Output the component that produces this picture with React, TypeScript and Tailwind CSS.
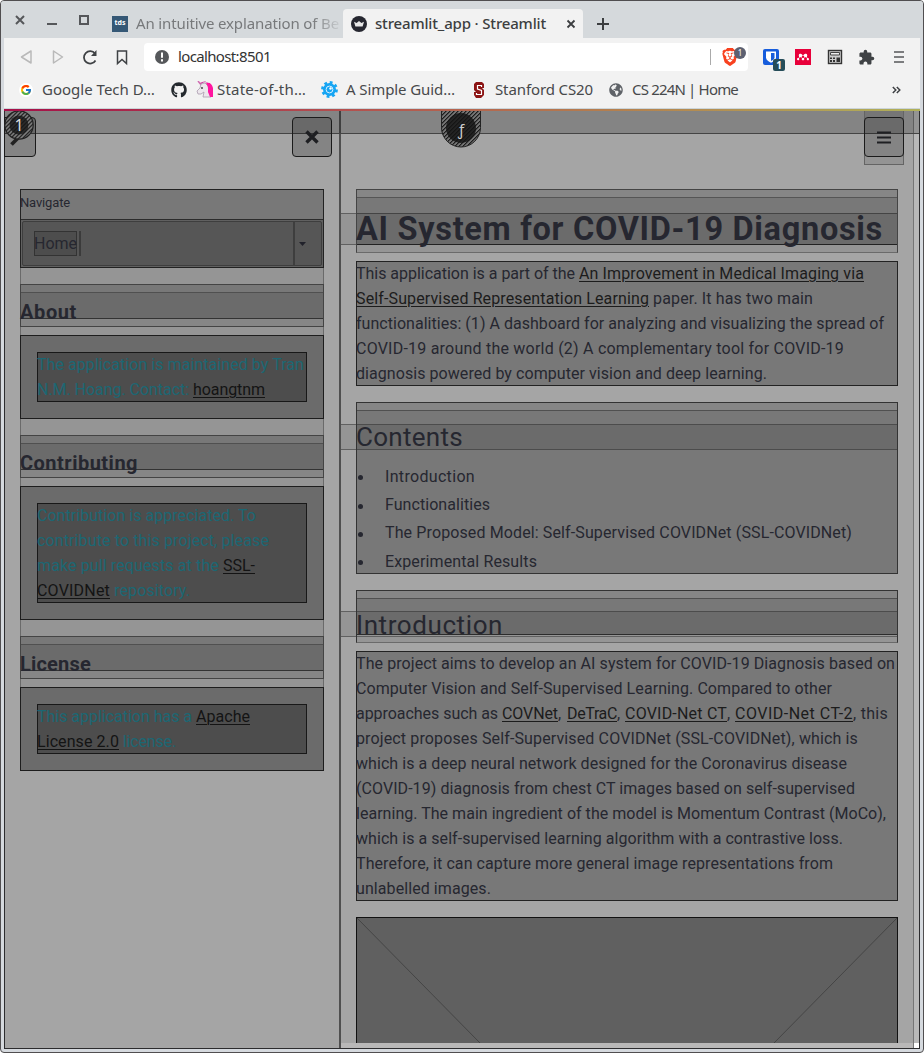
import React, { useLayoutEffect, useRef } from "react";
import { FcGoogle } from "react-icons/fc";
import { FaGithub, FaGlobeAmericas } from "react-icons/fa";
import { MdExtension } from "react-icons/md";
import { SiBrave, SiMendeley } from "react-icons/si";

/* A run of text whose tracking is tuned so that it fills exactly `w` pixels. */
function Fit({ w, children, className = "" }: { w: number; children: string; className?: string }) {
  const ref = useRef<HTMLSpanElement>(null);
  useLayoutEffect(() => {
    const el = ref.current;
    if (!el) return;
    el.style.letterSpacing = "0px";
    const natural = el.getBoundingClientRect().width;
    el.style.letterSpacing = `${(w - natural) / children.length}px`;
  }, [w, children]);
  return (
    <span ref={ref} className={`inline-block shrink-0 whitespace-pre ${className}`}>
      {children}
    </span>
  );
}

type Seg = [text: string, width: number, link?: boolean];

function Lines({ rows, link }: { rows: Seg[][]; link: string }) {
  return (
    <>
      {rows.map((row, i) => (
        <div key={i} className="flex h-[25px] text-[16px] leading-[25px]">
          {row.map(([t, w, l], j) => (
            <Fit key={j} w={w} className={l ? `underline decoration-1 underline-offset-2 ${link}` : ""}>
              {t}
            </Fit>
          ))}
        </div>
      ))}
    </>
  );
}

function TabStrip() {
  return (
    <div className="flex h-[37px] bg-[#d5d9dc]">
      <svg width="110" height="37" viewBox="1 1 110 37" className="shrink-0">
        <path d="M16 16l8 8M24 16l-8 8" stroke="#55575a" strokeWidth="2" fill="none" />
        <path d="M47 24h10" stroke="#55575a" strokeWidth="2.2" />
        <rect x="80" y="16" width="8" height="8" fill="none" stroke="#55575a" strokeWidth="2" />
      </svg>
      <div className="flex w-[232px] items-center pt-2 text-[15px] text-[#77797b]">
        <div className="ml-px mr-2 flex size-4 shrink-0 items-center justify-center bg-[#355876] text-[7px] font-bold text-white">tds</div>
        <div className="w-[205px] [mask-image:linear-gradient(to_right,black_86%,transparent_101%)]">
          <Fit w={203}>An intuitive explanation of Be</Fit>
        </div>
      </div>
      <div className="mt-2 flex h-[29px] w-[240px] items-center rounded-t bg-[#f2f2f2] pl-2 text-[15px] font-medium text-[#3c3e40]">
        <svg width="16" height="16" viewBox="0 0 16 16" className="mr-2 shrink-0">
          <circle cx="8" cy="8" r="8" fill="#262730" />
          <path d="M3 5.7l2.600 1.300L8 5l2.400 2L13 5.700l-1.400 4.800H4.400z" fill="#e8e8e8" />
        </svg>
        <Fit w={171}>streamlit_app · Streamlit</Fit>
        <svg width="10" height="10" viewBox="0 0 10 10" className="ml-[20px]">
          <path d="M1.5 1.5l7 7M8.5 1.5l-7 7" stroke="#3c3e40" strokeWidth="1.8" />
        </svg>
      </div>
      <svg width="12" height="12" viewBox="0 0 12 12" className="ml-[14px] mt-[17px]">
        <path d="M6 0v12M0 6h12" stroke="#3c3e40" strokeWidth="2" />
      </svg>
    </div>
  );
}

function Toolbar() {
  return (
    <div className="flex h-[38px] bg-[#f2f2f2]">
      <svg width="140" height="38" viewBox="4 38 140 38" fill="none" className="shrink-0">
        <path d="M31 51v12l-9.500-6z" stroke="#b9b9b9" strokeWidth="1.500" strokeLinejoin="round" />
        <path d="M53.500 51v12l9-6z" stroke="#b9b9b9" strokeWidth="1.500" strokeLinejoin="round" />
        <path d="M95.500 60.500a6.200 6.200 0 1 1-.5-7" stroke="#3f4245" strokeWidth="1.800" />
        <path d="M96.500 50v6h-5.500z" fill="#3f4245" />
        <path d="M117.500 51h9v12.500l-4.500-4-4.500 4z" stroke="#3f4245" strokeWidth="1.500" />
      </svg>
      <div className="mt-[5px] flex h-[28px] w-[604px] items-center rounded bg-white pl-[11px]">
        <svg width="14" height="14" viewBox="0 0 14 14" className="mr-[9px] shrink-0">
          <circle cx="7" cy="7" r="7" fill="#56585b" />
          <path d="M7 2.500v5.200M7 9.300v2.200" stroke="white" strokeWidth="2" />
        </svg>
        <div className="-mt-px flex w-[532px] text-[15px] text-[#333]">
          <Fit w={61}>localhost:</Fit>
          <Fit w={32}>8501</Fit>
        </div>
        <div className="h-4 w-px shrink-0 bg-[#aaa]" />
        <div className="relative ml-[10px] size-[18px]">
          <SiBrave className="size-[18px] text-[#f8411f]" />
          <span className="absolute left-[13px] -top-px flex size-3 items-center justify-center rounded-full bg-[#5c6070] text-[8px] text-white">1</span>
        </div>
      </div>
      <div className="flex h-[38px] w-[172px] items-center pl-[15px]">
        <div className="relative size-4">
          <svg width="16" height="16" viewBox="0 0 16 16">
            <rect width="16" height="16" rx="2" fill="#175ddc" />
            <path d="M3 2.500h10v6c0 2.500-2.500 4-5 5.300C5.500 12.500 3 11 3 8.500z" fill="white" />
            <path d="M8 4h3.500v4.500c0 1.500-1.500 2.500-3.500 3.500z" fill="#175ddc" />
          </svg>
          <span className="absolute left-[10px] top-[10px] flex size-3 items-center justify-center rounded-[2px] bg-[#264d59] text-[10px] font-bold text-white">1</span>
        </div>
        <div className="ml-4 flex size-4 items-center justify-center bg-[#e8003a]">
          <SiMendeley className="size-3 text-white" />
        </div>
        <svg width="16" height="16" viewBox="0 0 16 16" className="ml-4">
          <rect x="1.500" y="1.500" width="13" height="13" fill="#ccc" stroke="#333" strokeWidth="1.400" />
          <path d="M3.500 3.500h9v2.500h-9z" fill="#eee" stroke="#444" />
          <path d="M3 8.500h2v1.500H3zM6 8.500h2v1.500H6zM3 11h2v2H3zM6 11h2v2H6zM9.500 8.500H13V13H9.500z" fill="#333" />
        </svg>
        <MdExtension className="ml-[15px] size-[17px] text-[#3f4245]" />
        <svg width="10" height="12" viewBox="0 0 10 12" className="ml-[19px]">
          <path d="M0 1h10M0 6h10M0 11h10" stroke="#55575a" strokeWidth="1.700" />
        </svg>
      </div>
    </div>
  );
}

function Bookmarks() {
  return (
    <div className="flex h-8 items-center bg-[#f2f2f2] pb-[5px] text-[15px] text-[#47494b]">
      <div className="ml-[15px] mr-[9px] flex size-[14px] items-center justify-center rounded-full bg-white">
        <FcGoogle className="size-[12px]" />
      </div>
      <Fit w={113}>Google Tech D…</Fit>
      <FaGithub className="ml-4 size-4 text-[#24292e]" />
      <svg width="17" height="17" viewBox="0 0 17 17" className="ml-[9px]">
        <path d="M2 0l4 5" stroke="#d06ab0" strokeWidth="1.500" />
        <path d="M5 3l4-1 3 3 1 6 2 5H7l1-5-3 2H2l-1-3 3-3z" fill="#ece6ec" stroke="#a99aad" strokeWidth=".8" />
        <path d="M4 2c3-2 6-2 8 0-2-1-5-1-7 1z" fill="#c9369c" />
        <path d="M10 2c4-1 6 1 7 5v9h-3l-2-5V6z" fill="#ff159f" />
        <circle cx="6" cy="7" r=".9" fill="#333" />
      </svg>
      <Fit w={89} className="ml-1">State-of-th…</Fit>
      <svg width="17" height="17" viewBox="-8.500 -8.500 17 17" className="ml-[15px]">
        <circle r="6.500" fill="#16a5f3" />
        <circle r="7" fill="none" stroke="#16a5f3" strokeWidth="2.800" strokeDasharray="2.750 2.750" />
        <circle r="3.400" fill="none" stroke="#d6efff" strokeWidth="1" />
        <circle cx="1" cy="-1" r="1.200" fill="white" />
      </svg>
      <Fit w={109} className="ml-2">A Simple Guid…</Fit>
      <svg width="12" height="16" viewBox="0 0 12 16" className="ml-[18px]">
        <path d="M3 0h6l2 2v4H9l2 2v5l-3 3H3l-2-3v-3h2L1 8V2z" fill="#8c1515" />
        <path d="M8.500 5V3.500h-4V7l4 1.500v4h-5V11" fill="none" stroke="white" strokeWidth="1.200" />
      </svg>
      <Fit w={98} className="ml-[10px]">Stanford CS20</Fit>
      <FaGlobeAmericas className="ml-4 size-[14px] text-[#5f6368]" />
      <Fit w={106} className="ml-[9px]">CS 224N | Home</Fit>
      <svg width="9" height="8" viewBox="0 0 9 8" className="ml-[154px]">
        <path d="M.8 1l3 3-3 3M4.800 1l3 3-3 3" fill="none" stroke="#3f4245" strokeWidth="1.500" />
      </svg>
    </div>
  );
}

function SideHeading({ text, w }: { text: string; w: number }) {
  return (
    <div className="-ml-px mt-4 flex h-[43px] w-[304px] flex-col border border-[#444] bg-[#868686]">
      <div className="h-2 border-b border-[#505050] bg-[#787878]" />
      <h3 className="h-[26px] border-b border-[#333] bg-[#6b6b6b] text-[20px] font-bold leading-[38px] text-[#262730]">
        <Fit w={w} className="-ml-px">{text}</Fit>
      </h3>
    </div>
  );
}

function Notice({ rows }: { rows: Seg[][] }) {
  return (
    <div className="-ml-px mt-2 w-[304px] border border-[#1d1d1d] bg-[#6b6b6b] p-4">
      <div className="w-[270px] border border-[#181818] bg-[#4d4d4d] text-[#1c6773]">
        <div className="-my-px -ml-px">
          <Lines rows={rows} link="text-[#141414]" />
        </div>
      </div>
    </div>
  );
}

function Sidebar() {
  return (
    <aside className="w-[334px] pl-[15px] pt-[78px]">
      <div className="w-[304px] border-x border-[#6a6a6a] bg-[#959595]">
        <div className="-ml-px h-[79px] w-[304px] border border-[#222] bg-[#787878]">
          <div className="h-[29px] pt-[3px] text-[13px] leading-[20px] text-[#262730]">
            <Fit w={50} className="-ml-px">Navigate</Fit>
          </div>
          <div className="h-[48px] border-t border-[#2c2c2c] bg-[#606060] px-px pt-px">
            <div className="flex h-[45px] rounded-[2px] border border-[#3e3e3e] bg-[#565656]">
              <div className="flex w-[270px] items-center pl-[11px]">
                <span className="h-[25px] w-[43px] border border-[#333] bg-[#4d4d4d] text-[16px] leading-[23px] text-[#262730]">
                  <Fit w={43} className="-ml-px">Home</Fit>
                </span>
                <span className="ml-[2px] h-[25px] w-[2px] bg-[#3b3b3b]" />
              </div>
              <div className="flex flex-1 items-center border-l-2 border-[#3e3e3e] pl-1">
                <svg width="7" height="4" viewBox="0 0 7 4">
                  <path d="M0 0h7L3.500 4z" fill="#20212a" />
                </svg>
              </div>
            </div>
          </div>
        </div>
        <SideHeading text="About" w={57} />
        <Notice
          rows={[
            [["The application is maintained by Tran", 267]],
            [["N.M. Hoang. Contact: ", 156], ["hoangtnm", 72, true]],
          ]}
        />
        <SideHeading text="Contributing" w={118} />
        <Notice
          rows={[
            [["Contribution is appreciated. To", 219]],
            [["contribute to this project, please", 232]],
            [["make pull requests at the ", 186], ["SSL-", 32, true]],
            [["COVIDNet", 73, true], [" repository.", 80]],
          ]}
        />
        <SideHeading text="License" w={71} />
        <Notice
          rows={[
            [["This application has a ", 159], ["Apache", 54, true]],
            [["License 2.0", 82, true], [" license.", 57]],
          ]}
        />
      </div>
    </aside>
  );
}

function Main() {
  const band = "absolute -left-[16px] w-[15px] border-y border-[#606060] bg-[#959595]";
  return (
    <main className="h-[932px] w-[572px] overflow-hidden pl-[15px] pt-[78px]">
      <div className="relative h-[64px] w-[542px] border border-[#444] border-b-[#6a6a6a] bg-[#959595]">
        <div className="h-2 border-b border-[#555] bg-[#868686]" />
        <div className="h-4 border-b border-[#444] bg-[#787878]" />
        <h1 className="h-[31px] border-b border-[#222] bg-[#6b6b6b] text-[32.5px] font-bold leading-[30px] text-[#262730]">
          <Fit w={527} className="-ml-px">AI System for COVID-19 Diagnosis</Fit>
        </h1>
        <div className={`${band} top-[23px] h-8`} />
      </div>

      <div className="mt-2 h-[125px] w-[542px] border border-[#222] bg-[#787878] text-[#262730]">
        <div className="-mt-px -ml-px">
          <Lines
            link="text-[#1c1c1c]"
            rows={[
              [["This application is a part of the ", 223], ["An Improvement in Medical Imaging via", 285, true]],
              [["Self-Supervised Representation Learning", 293, true], [" paper. It has two main", 164]],
              [["functionalities: (1) A dashboard for analyzing and visualizing the spread of", 528]],
              [["COVID-19 around the world (2) A complementary tool for COVID-19", 488]],
              [["diagnosis powered by computer vision and deep learning.", 411]],
            ]}
          />
        </div>
      </div>

      <div className="relative mt-4 h-[172px] w-[542px] border border-[#333] bg-[#787878] text-[#262730]">
        <div className="h-2 border-b border-[#505050] bg-[#868686]" />
        <div className="h-[14px] border-b border-[#4c4c4c]" />
        <h2 className="h-[25px] border-b border-[#4c4c4c] bg-[#6b6b6b] text-[26px] leading-[25px]">
          <Fit w={107} className="-ml-px">Contents</Fit>
        </h2>
        <div className={`${band} top-[21px] h-[26px]`} />
        <ul className="pt-[12.5px] text-[16px]">
          {(
            [
              ["Introduction", 90],
              ["Functionalities", 105],
              ["The Proposed Model: Self-Supervised COVIDNet (SSL-COVIDNet)", 467],
              ["Experimental Results", 152],
            ] as [string, number][]
          ).map(([t, w]) => (
            <li key={t} className="flex h-[28.4px] items-center">
              <span className="ml-px mr-[22px] mt-[2px] size-[5px] rounded-full bg-[#262730]" />
              <Fit w={w}>{t}</Fit>
            </li>
          ))}
        </ul>
      </div>

      <div className="relative mt-4 h-[53px] w-[542px] border border-[#333] border-b-[#6a6a6a] bg-[#959595] text-[#262730]">
        <div className="h-2 border-b border-[#505050] bg-[#868686]" />
        <div className="h-[13px] border-b border-[#4c4c4c] bg-[#787878]" />
        <h2 className="h-[23px] border-b border-[#2c2c2c] bg-[#6b6b6b] text-[26px] leading-[26px]">
          <Fit w={147} className="-ml-px">Introduction</Fit>
        </h2>
        <div className="mt-px h-px bg-[#606060]" />
        <div className={`${band} top-[20px] h-[26px]`} />
      </div>

      <div className="mt-2 h-[250px] w-[542px] border border-[#222] bg-[#787878] text-[#262730]">
        <div className="-mt-px -ml-px">
          <Lines
            link="text-[#1c1c1c]"
            rows={[
              [["The project aims to develop an AI system for COVID-19 Diagnosis based on", 539]],
              [["Computer Vision and Self-Supervised Learning. Compared to other", 476]],
              [
                ["approaches such as ", 146],
                ["COVNet", 56, true],
                [", ", 9],
                ["DeTraC", 50, true],
                [", ", 8],
                ["COVID-Net CT", 102, true],
                [", ", 8],
                ["COVID-Net CT-2", 118, true],
                [", this", 35],
              ],
              [["project proposes Self-Supervised COVIDNet (SSL-COVIDNet), which is", 502]],
              [["which is a deep neural network designed for the Coronavirus disease", 491]],
              [["(COVID-19) diagnosis from chest CT images based on self-supervised", 499]],
              [["learning. The main ingredient of the model is Momentum Contrast (MoCo),", 530]],
              [["which is a self-supervised learning algorithm with a contrastive loss.", 487]],
              [["Therefore, it can capture more general image representations from", 477]],
              [["unlabelled images.", 135]],
            ]}
          />
        </div>
      </div>

      <svg width="542" height="126" viewBox="0 0 542 126" className="mt-4">
        <rect x=".5" y=".5" width="541" height="200" fill="#606060" stroke="#111" />
        <path d="M1 1L124 126M541 1L418 126" stroke="#454545" strokeWidth="1" />
      </svg>
    </main>
  );
}

function FloatingControls() {
  return (
    <>
      <div className="absolute inset-x-0 top-0 h-[23px] border-b border-[#444] bg-black/20" />
      <div className="absolute -left-px top-[6px] h-10 w-8 rounded-r border border-[#1b1b1b] bg-black/20" />
      <svg className="absolute -left-px top-0" width="34" height="40" viewBox="4 111 34 40">
        <defs>
          <pattern id="hatch" width="2.83" height="2.83" patternUnits="userSpaceOnUse" patternTransform="rotate(45)">
            <rect width="2.83" height="2.83" fill="#8f8f8f" />
            <rect width="1.4" height="2.83" fill="#1c1c1c" />
          </pattern>
        </defs>
        <path d="M11.500 144.500l8-8" stroke="#222" strokeWidth="3.800" />
        <circle cx="19" cy="125" r="14.200" fill="url(#hatch)" stroke="#222" strokeWidth="1.200" />
        <circle cx="19" cy="125" r="9.500" fill="#161616" fillOpacity=".8" />
      </svg>
      <span className="absolute left-0 top-1 w-7 text-center font-['Noto_Sans',sans-serif] text-[16px] leading-[20px] text-[#ddd]">1</span>

      <div className="absolute left-[287px] top-[6px] flex size-10 items-center justify-center rounded border border-[#1b1b1b] bg-black/20">
        <svg width="14" height="14" viewBox="0 0 14 14">
          <path d="M1.500 1.500l11 11M12.500 1.500l-11 11" stroke="#1e1f22" strokeWidth="3.400" />
        </svg>
      </div>

      <svg className="absolute left-[435px] top-0" width="42" height="38" viewBox="440 111 42 38">
        <path d="M441.500 108v19.500a19.500 19.500 0 0 0 39 0V108z" fill="url(#hatch)" stroke="#222" />
        <circle cx="461" cy="128" r="15" fill="#141414" fillOpacity=".84" />
      </svg>
      <span className="absolute left-[441px] top-[8px] w-[30px] text-center font-['Noto_Sans',sans-serif] text-[15px] leading-[20px] text-[#ccc]">ƒ</span>

      <div className="absolute left-[859px] top-0 h-[54px] w-10 border border-t-0 border-[#646464] bg-black/10" />
      <div className="absolute left-[859px] top-[6px] flex size-10 items-center justify-center rounded border border-[#1b1b1b] bg-black/10">
        <svg width="14" height="13" viewBox="0 0 14 13">
          <path d="M0 1.500h14M0 6.500h14M0 11.500h14" stroke="#1e1f22" strokeWidth="1.800" />
        </svg>
      </div>
    </>
  );
}

export default function App() {
  return (
    <div className="h-[1053px] w-[924px] bg-white">
      <div className="h-[1053px] w-[924px] overflow-hidden rounded-[4px] border border-[#504e50] bg-[#d5d9de] font-['Noto_Sans',sans-serif]">
        <TabStrip />
        <div className="ml-[3px] w-[916px]">
          <Toolbar />
          <Bookmarks />
          <div className="h-px bg-[#ccd5d9]" />
          <div className="h-[2px] bg-[linear-gradient(to_right,#a50f48,#b4554f_40%,#b4804f_67%,#b0b05a)]" />
          <div className="relative flex h-[938px] w-[916px] border border-t-0 border-[#2c2c2e] bg-[#a5a5a5] font-['Roboto',sans-serif]">
            <Sidebar />
            <div className="w-[2px] bg-[#4f4f4f]" />
            <div className="w-[572px]">
              <Main />
              <div className="h-[5px] bg-[#b9b8b8]" />
            </div>
            <div className="w-px bg-[#767676]" />
            <div className="flex w-[5px] flex-col bg-[#b9b9b9]">
              <div className="mt-auto h-[5px] bg-white" />
            </div>
            <FloatingControls />
          </div>
        </div>
      </div>
    </div>
  );
}
